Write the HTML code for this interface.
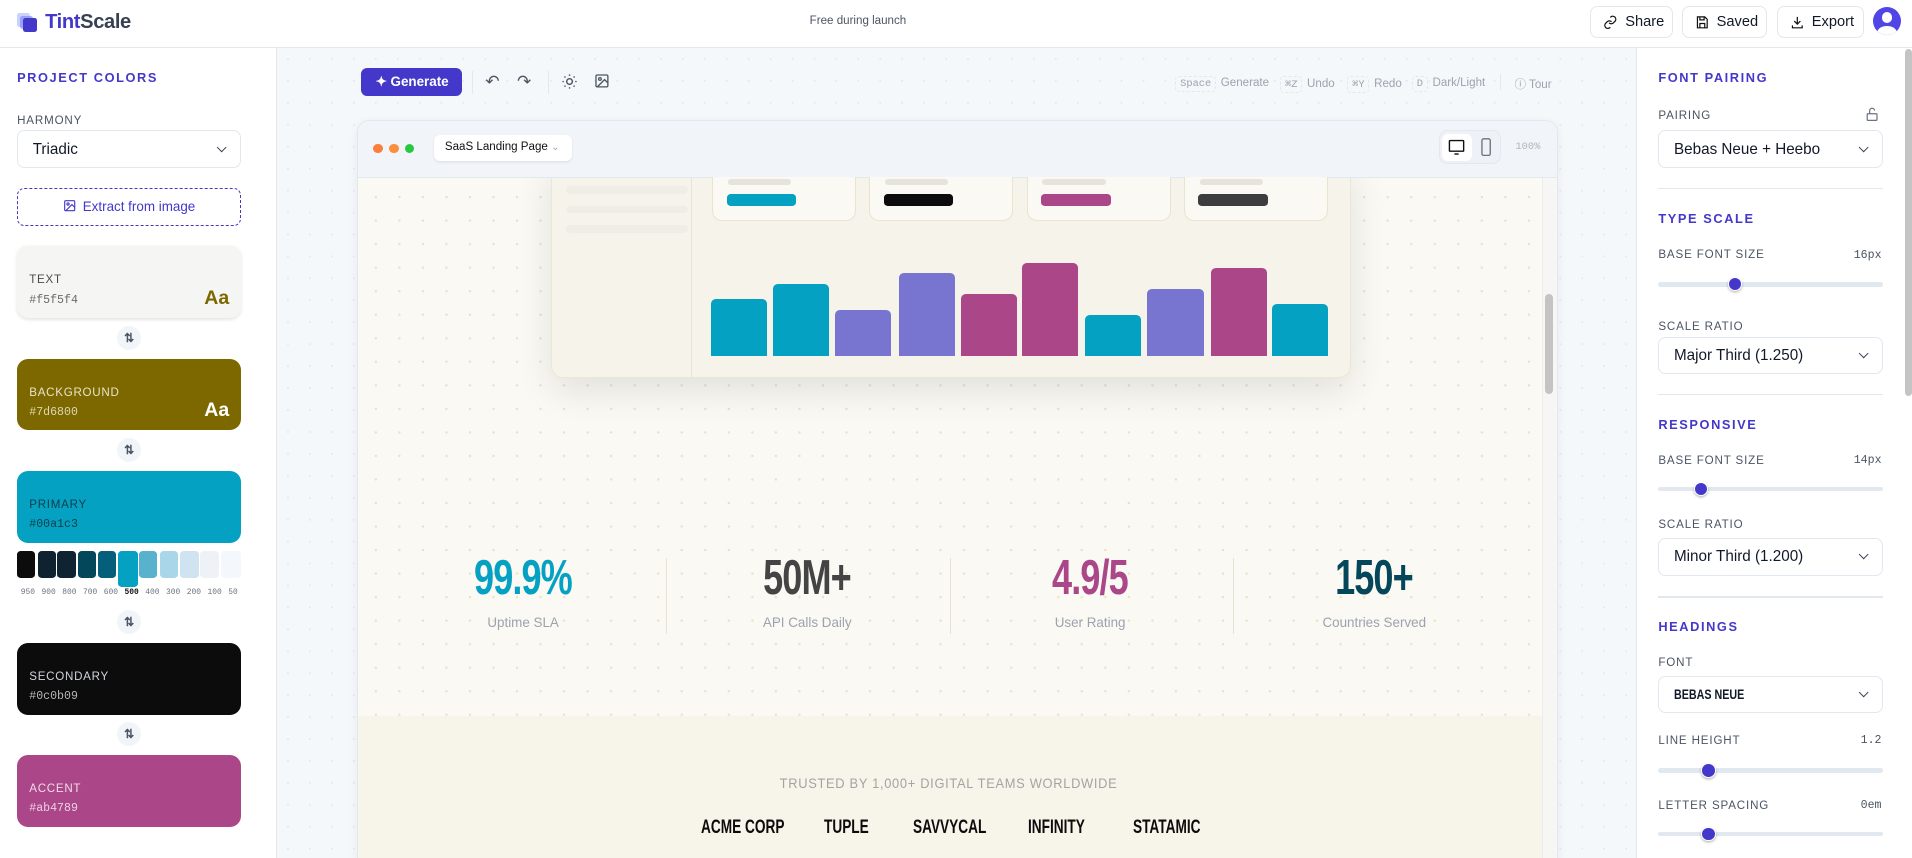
<!DOCTYPE html>
<html><head><meta charset="utf-8">
<style>
*{box-sizing:border-box;margin:0;padding:0}
html,body{width:1912px;height:858px;overflow:hidden;background:#fff}
body{font-family:"Liberation Sans",sans-serif;color:#1f2937}
#root{zoom:1.21939;width:1568px;height:704px;position:relative;overflow:hidden}
.abs{position:absolute}
.hdr{left:0;top:0;width:1568px;height:39px;background:#fff;border-bottom:1px solid #e5e7eb}
.btn{position:absolute;top:5px;height:26px;border:1px solid #e5e7eb;border-radius:6px;background:#fff;font-size:12px;color:#111827;display:flex;align-items:center;gap:6px;padding-left:10px}
.left{left:0;top:39px;width:227px;height:665px;background:#fff;border-right:1px solid #e2e8f0}
.right{left:1342px;top:39px;width:226px;height:665px;background:#fff;border-left:1px solid #e2e8f0}
.center{left:227px;top:39px;width:1115px;height:665px;background:#f5f8fb;background-image:radial-gradient(#e6eaf0 0.8px,transparent 1px);background-size:18px 18px}
.sect{font-size:10.5px;font-weight:bold;letter-spacing:1.3px;color:#4338ca}
.lbl{font-size:9.5px;letter-spacing:0.7px;color:#4b5563}
.sel{position:absolute;height:31px;border:1px solid #e2e8f0;border-radius:6px;background:#fff;font-size:12.5px;color:#111827;padding-left:12px;display:flex;align-items:center}
.sel .chev{position:absolute;right:12px;top:10px;width:6px;height:6px;border-right:1.3px solid #374151;border-bottom:1.3px solid #374151;transform:rotate(45deg)}
.card{position:absolute;left:14px;width:184px;height:59px;border-radius:9px}
.card .n{position:absolute;left:10px;top:23px;font-size:9.5px;letter-spacing:0.6px}
.card .h{position:absolute;left:10px;top:39px;font-size:9.5px;font-family:"Liberation Mono",monospace}
.card .aa{position:absolute;right:10px;top:33px;font-size:16px;font-weight:bold}
.swap{position:absolute;left:96px;width:20px;height:20px;border-radius:50%;background:#f1f5f9;font-size:10px;color:#4b5563;text-align:center;line-height:20px;font-weight:bold}
.track{position:absolute;left:1360px;width:184px;height:4px;border-radius:2px;background:#e2e8f0}
.thumb{position:absolute;top:-4px;width:12px;height:12px;border-radius:50%;background:#4338ca;border:1.5px solid #fff;box-shadow:0 1px 2px rgba(0,0,0,.3)}
.div{position:absolute;left:1360px;width:184px;height:1px;background:#e2e8f0}
.val{position:absolute;right:25px;font-size:9.5px;color:#4b5563;font-family:"Liberation Mono",monospace}
.kbd{display:inline-block;border:1px dashed #e5e7eb;border-radius:3px;padding:1px 3px;font-family:"Liberation Mono",monospace;font-size:8.5px;color:#9ca3af;margin-right:4px}
.hint{position:absolute;top:62px;font-size:9.5px;color:#9ca3af}
.bebas{font-family:"Liberation Sans Narrow","Liberation Sans",sans-serif;font-weight:bold}
.bar{position:absolute;bottom:0;width:46px;border-radius:4px 4px 0 0}
.sc{position:absolute;top:145px;width:118px;height:36px;background:#faf9f3;border:1px solid #e9e4cf;border-top:none;border-radius:0 0 8px 8px}
.sc i{position:absolute;left:12px;top:2px;width:52px;height:5px;border-radius:3px;background:#e5e3dc}
.sc b{position:absolute;left:11px;top:14px;width:57px;height:10px;border-radius:3px}
.stat{position:absolute;top:450px;width:200px;text-align:center}
.stat .num{font-size:40px;line-height:48px;transform:scaleX(0.74);letter-spacing:-1px}
.stat .l{font-size:11px;color:#9ca3af;margin-top:6px}
.logo{position:absolute;top:669px;font-size:16px;color:#0c0c0c;transform:scaleX(.7);transform-origin:left;white-space:nowrap}
</style></head><body><div id="root">

<!-- header -->
<div class="abs hdr">
  <div class="abs" style="left:14px;top:11px;width:11px;height:11px;background:#a5b4fc;border-radius:2px;opacity:.6"></div>
  <div class="abs" style="left:16px;top:13px;width:11px;height:11px;background:#818cf8;border-radius:2px;opacity:.7"></div>
  <div class="abs" style="left:19px;top:15px;width:11px;height:11px;background:#4338ca;border-radius:2px"></div>
  <div class="abs" style="left:37px;top:9px;font-size:16.5px;font-weight:bold;letter-spacing:-0.3px"><span style="color:#4338ca">Tint</span><span style="color:#374151">Scale</span></div>
  <div class="abs" style="left:664px;top:12px;font-size:9.5px;color:#4b5563">Free during launch</div>
  <div class="btn" style="left:1304px;width:68px"><svg width="12" height="12" viewBox="0 0 24 24" fill="none" stroke="#111" stroke-width="2"><path d="M10 13a5 5 0 0 0 7 0l3-3a5 5 0 0 0-7-7l-1 1M14 11a5 5 0 0 0-7 0l-3 3a5 5 0 0 0 7 7l1-1"/></svg>Share</div>
  <div class="btn" style="left:1379px;width:70px"><svg width="12" height="12" viewBox="0 0 24 24" fill="none" stroke="#111" stroke-width="2"><path d="M5 3h11l4 4v14H4V3zM8 3v5h7V3M8 21v-7h8v7"/></svg>Saved</div>
  <div class="btn" style="left:1457px;width:72px"><svg width="12" height="12" viewBox="0 0 24 24" fill="none" stroke="#111" stroke-width="2"><path d="M12 3v12M7 10l5 5 5-5M4 17v4h16v-4"/></svg>Export</div>
  <div class="abs" style="left:1536px;top:6px;width:23px;height:23px;border-radius:50%;background:#4f46e5;overflow:hidden">
    <div class="abs" style="left:7px;top:4px;width:9px;height:9px;border-radius:50%;background:#fff"></div>
    <div class="abs" style="left:3px;top:15px;width:17px;height:12px;border-radius:50%;background:#fff"></div>
  </div>
</div>

<!-- left panel -->
<div class="abs left"></div>
<div class="abs sect" style="left:14px;top:57px">PROJECT COLORS</div>
<div class="abs lbl" style="left:14px;top:94px">HARMONY</div>
<div class="sel" style="left:14px;top:107px;width:184px">Triadic<span class="chev"></span></div>
<div class="abs" style="left:14px;top:154px;width:184px;height:31px;border:1px dashed #4338ca;border-radius:6px;font-size:11px;color:#4338ca;text-align:center;line-height:29px">
 <svg width="11" height="11" viewBox="0 0 24 24" fill="none" stroke="#4338ca" stroke-width="2" style="vertical-align:-1px;margin-right:5px"><rect x="3" y="3" width="18" height="18" rx="2"/><circle cx="9" cy="9" r="2"/><path d="M21 15l-5-5L5 21"/></svg>Extract from image</div>

<div class="card" style="top:202px;background:#f5f5f4;box-shadow:0 1px 3px rgba(0,0,0,.12)"><span class="n" style="color:#4b4b4b">TEXT</span><span class="h" style="color:#6b6b6b">#f5f5f4</span><span class="aa" style="color:#7d6800">Aa</span></div>
<div class="swap" style="top:267px">⇅</div>
<div class="card" style="top:294px;background:#7d6800"><span class="n" style="color:#e8e3c8">BACKGROUND</span><span class="h" style="color:#ddd6b0">#7d6800</span><span class="aa" style="color:#fff">Aa</span></div>
<div class="swap" style="top:359px">⇅</div>
<div class="card" style="top:386px;background:#05a1c3"><span class="n" style="color:#0c3e4c">PRIMARY</span><span class="h" style="color:#0c3e4c">#00a1c3</span></div>
<div class="abs" style="left:14px;top:452px;width:184px;height:30px">
 <div class="abs" style="left:0;top:0;width:15px;height:22px;border-radius:3px;background:#0c0c0c"></div>
 <div class="abs" style="left:17px;top:0;width:15px;height:22px;border-radius:3px;background:#0f2230"></div>
 <div class="abs" style="left:33px;top:0;width:15px;height:22px;border-radius:3px;background:#0f2333"></div>
 <div class="abs" style="left:50px;top:0;width:15px;height:22px;border-radius:3px;background:#03475a"></div>
 <div class="abs" style="left:66px;top:0;width:15px;height:22px;border-radius:3px;background:#055f7a"></div>
 <div class="abs" style="left:83px;top:0;width:16px;height:29px;border-radius:3px;background:#05a1c3"></div>
 <div class="abs" style="left:100px;top:0;width:15px;height:22px;border-radius:3px;background:#58b2cd"></div>
 <div class="abs" style="left:117px;top:0;width:15px;height:22px;border-radius:3px;background:#aad6ea"></div>
 <div class="abs" style="left:134px;top:0;width:15px;height:22px;border-radius:3px;background:#cfe3f1"></div>
 <div class="abs" style="left:150px;top:0;width:16px;height:22px;border-radius:3px;background:#eef2f7"></div>
 <div class="abs" style="left:167px;top:0;width:17px;height:22px;border-radius:3px;background:#f4f7fb"></div>
</div>
<div class="abs" style="left:14px;top:482px;width:184px;font-family:'Liberation Mono',monospace;font-size:6.5px;color:#6b7280;display:flex;justify-content:space-between;padding:0 3px"><span>950</span><span>900</span><span>800</span><span>700</span><span>600</span><b style="color:#111">500</b><span>400</span><span>300</span><span>200</span><span>100</span><span>50</span></div>
<div class="swap" style="top:500px">⇅</div>
<div class="card" style="top:527px;background:#0c0c0c"><span class="n" style="color:#d1d5db">SECONDARY</span><span class="h" style="color:#b8b8b8">#0c0b09</span></div>
<div class="swap" style="top:592px">⇅</div>
<div class="card" style="top:619px;background:#ab4789"><span class="n" style="color:#f1dbe9">ACCENT</span><span class="h" style="color:#ecd0e2">#ab4789</span></div>

<!-- center -->
<div class="abs center"></div>
<div class="abs" style="left:296px;top:56px;width:83px;height:23px;border-radius:5px;background:#4338ca;color:#fff;font-size:11px;font-weight:bold;line-height:23px;padding-left:12px">✦ Generate</div>
<div class="abs" style="left:387px;top:58px;width:1px;height:19px;background:#e2e8f0"></div>
<div class="abs" style="left:398px;top:59px;font-size:14px;color:#4b5563">↶</div>
<div class="abs" style="left:424px;top:59px;font-size:14px;color:#4b5563">↷</div>
<div class="abs" style="left:449px;top:58px;width:1px;height:19px;background:#e2e8f0"></div>
<svg class="abs" style="left:460px;top:60px" width="14" height="14" viewBox="0 0 24 24" fill="none" stroke="#4b5563" stroke-width="2"><circle cx="12" cy="12" r="4"/><path d="M12 2v2M12 20v2M4.9 4.9l1.4 1.4M17.7 17.7l1.4 1.4M2 12h2M20 12h2M4.9 19.1l1.4-1.4M17.7 6.3l1.4-1.4"/></svg>
<svg class="abs" style="left:487px;top:60px" width="13" height="13" viewBox="0 0 24 24" fill="none" stroke="#4b5563" stroke-width="2"><rect x="3" y="3" width="18" height="18" rx="2"/><circle cx="9" cy="9" r="2"/><path d="M21 15l-5-5L5 21"/></svg>
<div class="hint" style="left:964px"><span class="kbd">Space</span>Generate</div>
<div class="hint" style="left:1050px"><span class="kbd">⌘Z</span>Undo</div>
<div class="hint" style="left:1105px"><span class="kbd">⌘Y</span>Redo</div>
<div class="hint" style="left:1158px"><span class="kbd">D</span>Dark/Light</div>
<div class="abs" style="left:1230px;top:61px;width:1px;height:13px;background:#e5e7eb"></div>
<div class="hint" style="left:1242px">ⓘ Tour</div>

<!-- preview frame -->
<div class="abs" style="left:293px;top:98px;width:985px;height:620px;border:1px solid #e2e8f0;border-radius:10px;overflow:hidden;background:#faf9f3;box-shadow:0 2px 8px rgba(0,0,0,.06)">
  <div class="abs" style="left:0;top:47px;width:971px;height:441px;background:#faf9f4;background-image:radial-gradient(#e8e3c5 0.9px,transparent 1.1px);background-size:19.3px 19.3px;background-position:5px 6px"></div>
  <div class="abs" style="left:0;top:488px;width:971px;height:140px;background:#f7f5ea"></div>
  <div class="abs" style="left:971px;top:47px;width:14px;height:580px;background:#f6f6f4;border-left:1px solid #ececec"></div>
  <div class="abs" style="left:973px;top:142px;width:7px;height:82px;border-radius:4px;background:#c4c4c4"></div>

  <div class="abs" style="left:158px;top:30px;width:656px;height:181px;background:#f6f4ea;border:1px solid #ebe7d6;border-radius:10px;box-shadow:0 10px 30px rgba(0,0,0,.10)">
    <div class="abs" style="left:114px;top:0;width:1px;height:181px;background:#e9e4d2"></div>
  </div>
  <div class="abs" style="left:170px;top:54px;width:100px;height:60px">
    <div style="height:6px;border-radius:3px;background:#efede6;margin-bottom:10px"></div>
    <div style="height:6px;border-radius:3px;background:#efede6;margin-bottom:10px"></div>
    <div style="height:6px;border-radius:3px;background:#efede6;margin-bottom:10px"></div>
  </div>

  <div class="abs" style="left:0;top:0;width:985px;height:47px;background:#f1f4f8;border-bottom:1px solid #e2e8f0"></div>
  <div class="abs" style="left:12px;top:19px;width:8px;height:8px;border-radius:50%;background:#fb7f3c"></div>
  <div class="abs" style="left:25px;top:19px;width:8px;height:8px;border-radius:50%;background:#fb8f3c"></div>
  <div class="abs" style="left:38px;top:19px;width:8px;height:8px;border-radius:50%;background:#28c840"></div>
  <div class="abs" style="left:62px;top:12px;width:113px;height:21px;border-radius:5px;background:#fff;box-shadow:0 1px 2px rgba(0,0,0,.08);font-size:9.5px;color:#111;line-height:21px;padding-left:9px">SaaS Landing Page <span style="color:#9ca3af;font-size:8px">⌄</span></div>
  <div class="abs" style="left:886px;top:8px;width:51px;height:28px;border:1px solid #e2e8f0;border-radius:7px;background:#eef2f6"></div>
  <div class="abs" style="left:889px;top:11px;width:24px;height:22px;border-radius:5px;background:#fff"></div>
  <svg class="abs" style="left:894px;top:15px" width="14" height="13" viewBox="0 0 24 22" fill="none" stroke="#111" stroke-width="2"><rect x="2" y="2" width="20" height="15" rx="1"/><path d="M9 21h6"/></svg>
  <svg class="abs" style="left:920px;top:14px" width="10" height="15" viewBox="0 0 14 22" fill="none" stroke="#6b7280" stroke-width="1.6"><rect x="2" y="1" width="10" height="20" rx="2"/></svg>
  <div class="abs" style="left:949px;top:17px;font-family:'Liberation Mono',monospace;font-size:8.5px;color:#b0b5bd">100%</div>
</div>
<div class="sc" style="left:584px"><i></i><b style="background:#05a1c3"></b></div>
<div class="sc" style="left:713px"><i></i><b style="background:#0c0c0c"></b></div>
<div class="sc" style="left:842px"><i></i><b style="background:#ab4789"></b></div>
<div class="sc" style="left:971px"><i></i><b style="background:#3d3d40"></b></div>
<div class="abs" style="left:583px;top:200px;width:508px;height:92px">
  <div class="bar" style="left:0;height:47px;background:#05a1c3"></div>
  <div class="bar" style="left:51px;height:59px;background:#05a1c3"></div>
  <div class="bar" style="left:102px;height:38px;background:#7775cf"></div>
  <div class="bar" style="left:154px;height:68px;background:#7775cf"></div>
  <div class="bar" style="left:205px;height:51px;background:#ab4789"></div>
  <div class="bar" style="left:255px;height:76px;background:#ab4789"></div>
  <div class="bar" style="left:307px;height:34px;background:#05a1c3"></div>
  <div class="bar" style="left:358px;height:55px;background:#7775cf"></div>
  <div class="bar" style="left:410px;height:72px;background:#ab4789"></div>
  <div class="bar" style="left:460px;height:43px;background:#05a1c3"></div>
</div>

<div class="stat" style="left:329px"><div class="num bebas" style="color:#05a1c3">99.9%</div><div class="l">Uptime SLA</div></div>
<div class="stat" style="left:562px"><div class="num bebas" style="color:#444">50M+</div><div class="l">API Calls Daily</div></div>
<div class="stat" style="left:794px"><div class="num bebas" style="color:#ab4789">4.9/5</div><div class="l">User Rating</div></div>
<div class="stat" style="left:1027px"><div class="num bebas" style="color:#05475a">150+</div><div class="l">Countries Served</div></div>
<div class="abs" style="left:546px;top:458px;width:1px;height:62px;background:#e5e2d6"></div>
<div class="abs" style="left:779px;top:458px;width:1px;height:62px;background:#e5e2d6"></div>
<div class="abs" style="left:1011px;top:458px;width:1px;height:62px;background:#e5e2d6"></div>

<div class="abs" style="left:578px;top:632px;width:400px;text-align:center;white-space:nowrap"><span style="display:inline-block;font-family:'Liberation Sans Narrow','Liberation Sans',sans-serif;font-size:11.5px;letter-spacing:0.6px;color:#a3a3a3;transform:scaleX(.92)">TRUSTED BY 1,000+ DIGITAL TEAMS WORLDWIDE</span></div>
<div class="logo bebas" style="left:575px">ACME CORP</div>
<div class="logo bebas" style="left:676px">TUPLE</div>
<div class="logo bebas" style="left:749px">SAVVYCAL</div>
<div class="logo bebas" style="left:843px">INFINITY</div>
<div class="logo bebas" style="left:929px">STATAMIC</div>

<!-- right panel -->
<div class="abs right"></div>
<div class="abs" style="left:1562px;top:40px;width:6px;height:285px;border-radius:3px;background:#c4c4c4"></div>
<div class="abs sect" style="left:1360px;top:57px">FONT PAIRING</div>
<div class="abs lbl" style="left:1360px;top:90px">PAIRING</div>
<svg class="abs" style="left:1530px;top:88px" width="10" height="12" viewBox="0 0 20 24" fill="none" stroke="#6b7280" stroke-width="2"><rect x="2" y="11" width="16" height="11" rx="1"/><path d="M6 11V6a4 4 0 0 1 8 0"/></svg>
<div class="sel" style="left:1360px;top:107px;width:184px">Bebas Neue + Heebo<span class="chev"></span></div>
<div class="div" style="top:154px"></div>
<div class="abs sect" style="left:1360px;top:173px">TYPE SCALE</div>
<div class="abs lbl" style="left:1360px;top:204px">BASE FONT SIZE</div><div class="val" style="top:204px">16px</div>
<div class="track" style="top:231px"><div class="thumb" style="left:57px"></div></div>
<div class="abs lbl" style="left:1360px;top:263px">SCALE RATIO</div>
<div class="sel" style="left:1360px;top:276px;width:184px">Major Third (1.250)<span class="chev"></span></div>
<div class="div" style="top:323px"></div>
<div class="abs sect" style="left:1360px;top:342px">RESPONSIVE</div>
<div class="abs lbl" style="left:1360px;top:373px">BASE FONT SIZE</div><div class="val" style="top:372px">14px</div>
<div class="track" style="top:399px"><div class="thumb" style="left:29px"></div></div>
<div class="abs lbl" style="left:1360px;top:426px">SCALE RATIO</div>
<div class="sel" style="left:1360px;top:441px;width:184px">Minor Third (1.200)<span class="chev"></span></div>
<div class="div" style="top:489px"></div>
<div class="abs sect" style="left:1360px;top:508px">HEADINGS</div>
<div class="abs lbl" style="left:1360px;top:539px">FONT</div>
<div class="sel bebas" style="left:1360px;top:554px;width:184px;font-size:11px"><span style="display:inline-block;transform:scaleX(.8);transform-origin:left">BEBAS NEUE</span><span class="chev"></span></div>
<div class="abs lbl" style="left:1360px;top:603px">LINE HEIGHT</div><div class="val" style="top:602px">1.2</div>
<div class="track" style="top:630px"><div class="thumb" style="left:35px"></div></div>
<div class="abs lbl" style="left:1360px;top:656px">LETTER SPACING</div><div class="val" style="top:655px">0em</div>
<div class="track" style="top:682px"><div class="thumb" style="left:35px"></div></div>

</div></body></html>
